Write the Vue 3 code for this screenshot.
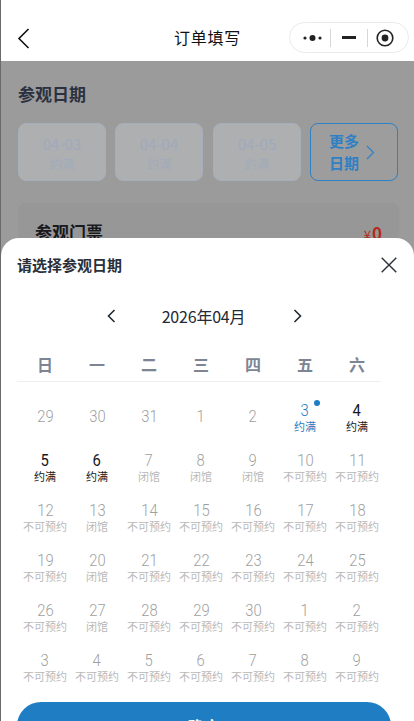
<script setup>
const weekdays = ['日', '一', '二', '三', '四', '五', '六']
const N = '不可预约'
const C = '闭馆'
const F = '约满'
const days = [
  ['29', '', 'off'], ['30', '', 'off'], ['31', '', 'off'], ['1', '', 'off'], ['2', '', 'off'], ['3', F, 'sel'], ['4', F, 'on'],
  ['5', F, 'on'], ['6', F, 'on'], ['7', C, 'off'], ['8', C, 'off'], ['9', C, 'off'], ['10', N, 'off'], ['11', N, 'off'],
  ['12', N, 'off'], ['13', C, 'off'], ['14', N, 'off'], ['15', N, 'off'], ['16', N, 'off'], ['17', N, 'off'], ['18', N, 'off'],
  ['19', N, 'off'], ['20', C, 'off'], ['21', N, 'off'], ['22', N, 'off'], ['23', N, 'off'], ['24', N, 'off'], ['25', N, 'off'],
  ['26', N, 'off'], ['27', C, 'off'], ['28', N, 'off'], ['29', N, 'off'], ['30', N, 'off'], ['1', N, 'off'], ['2', N, 'off'],
  ['3', N, 'off'], ['4', N, 'off'], ['5', N, 'off'], ['6', N, 'off'], ['7', N, 'off'], ['8', N, 'off'], ['9', N, 'off']
].map(([num, sub, state]) => ({ num, sub, state }))
const quick = ['04-03', '04-04', '04-05']
</script>

<template>
  <div class="page">
    <header class="nav">
      <svg class="back" width="13" height="21" viewBox="0 0 13 21"><path d="M11.5 1 2 10.5 11.5 20" fill="none" stroke="#111" stroke-width="1.6" /></svg>
      <h1 class="nav-title">订单填写</h1>
      <div class="capsule">
        <svg width="19" height="8" viewBox="0 0 19 8"><circle cx="2" cy="4" r="1.6" fill="#222" /><circle cx="9.5" cy="4" r="3" fill="#222" /><circle cx="17" cy="4" r="1.6" fill="#222" /></svg>
        <i class="cap-line"></i>
        <span class="cap-minus"></span>
        <i class="cap-line cap-line-b"></i>
        <svg width="18" height="18" viewBox="0 0 18 18"><circle cx="9" cy="9" r="7.8" fill="none" stroke="#222" stroke-width="1.6" /><circle cx="9" cy="9" r="3.4" fill="#222" /></svg>
      </div>
    </header>

    <main class="under">
      <h2 class="section">参观日期</h2>
      <div class="quick">
        <div v-for="q in quick" :key="q" class="q-card">
          <span class="q-date">{{ q }}</span>
          <span class="q-sub">约满</span>
        </div>
        <div class="q-more">
          <span class="q-more-text">更多<br />日期</span>
          <svg width="9" height="15" viewBox="0 0 9 15"><path d="M1 1l6.5 6.5L1 14" fill="none" stroke="#2f80c4" stroke-width="1.2" /></svg>
        </div>
      </div>
      <section class="ticket">
        <span class="ticket-name">参观门票</span>
        <span class="ticket-price"><small>¥</small>0</span>
      </section>
    </main>

    <section class="sheet">
      <div class="sheet-head">
        <h3 class="sheet-title">请选择参观日期</h3>
        <svg width="16" height="16" viewBox="0 0 16 16"><path d="M.7.7l14.6 14.6M15.3.7.7 15.3" fill="none" stroke="#2a2f3a" stroke-width="1.4" /></svg>
      </div>
      <div class="month">
        <svg width="9" height="14" viewBox="0 0 9 14"><path d="M7.5 1 1.5 7l6 6" fill="none" stroke="#222a36" stroke-width="1.6" /></svg>
        <span class="month-label">2026年04月</span>
        <svg width="9" height="14" viewBox="0 0 9 14"><path d="M1.5 1l6 6-6 6" fill="none" stroke="#222a36" stroke-width="1.6" /></svg>
      </div>
      <div class="weekdays">
        <span v-for="w in weekdays" :key="w" class="weekday">{{ w }}</span>
      </div>
      <div class="grid">
        <div v-for="(d, i) in days" :key="i" class="day" :class="d.state">
          <span class="num">{{ d.num }}</span>
          <span v-if="d.sub" class="sub">{{ d.sub }}</span>
          <i v-if="d.state === 'sel'" class="dot"></i>
        </div>
      </div>
      <button class="confirm">确定</button>
    </section>
  </div>
</template>

<style scoped>
.page {
  position: relative;
  width: 414px;
  height: 721px;
  overflow: hidden;
  background: #9b9b9b;
  border-left: 1px solid #6a6a6a;
  box-sizing: border-box;
  font-family: "Noto Sans CJK SC", "Noto Sans", sans-serif;
}
.nav {
  position: relative;
  height: 61px;
  background: #fff;
  box-sizing: border-box;
}
.back { position: absolute; left: 16px; top: 28px; }
.nav-title {
  margin: 0;
  padding-top: 25px;
  text-align: center;
  font-size: 16px;
  line-height: 25px;
  letter-spacing: 0.7px;
  font-weight: 400;
  color: #111;
}
.capsule {
  position: absolute;
  left: 288px;
  top: 22px;
  width: 120px;
  height: 31px;
  box-sizing: border-box;
  border: 1px solid #eaeaea;
  border-radius: 16px;
  background: #fff;
  display: flex;
  align-items: center;
  padding-left: 13px;
}
.cap-line { width: 1px; height: 18px; background: #d6d6d6; margin: 0 11px 0 8px; }
.cap-line-b { margin: 0 8px 0 11px; }
.cap-minus { width: 14px; height: 3px; background: #222; }
.under { padding: 0 15px 0 17px; }
.section {
  margin: 0;
  padding-top: 21px;
  font-size: 17px;
  line-height: 24px;
  font-weight: 700;
  color: #2b3140;
}
.quick {
  display: flex;
  gap: 9px;
  margin-top: 17px;
}
.q-card, .q-more {
  width: 88px;
  height: 58px;
  box-sizing: border-box;
  border-radius: 8px;
  display: flex;
}
.q-card {
  flex-direction: column;
  align-items: center;
  justify-content: center;
  background: #aeafb1;
  border: 1px solid #a5afbb;
}
.q-card:nth-child(3) { margin-left: 1px; }
.q-date { font-size: 15px; line-height: 23px; color: #9eaabd; }
.q-sub { font-size: 12px; line-height: 17px; color: #a0abbb; }
.q-more {
  align-items: center;
  justify-content: center;
  gap: 7px;
  padding-right: 4px;
  border: 1px solid #2f80c4;
  background: #9d9d9d;
}
.q-more-text { font-size: 15px; line-height: 22px; font-weight: 700; color: #2f80c4; text-align: center; }
.ticket {
  margin-top: 22px;
  height: 80px;
  padding: 17px 17px 0;
  background: #979797;
  border-radius: 8px;
  display: flex;
  justify-content: space-between;
  align-items: flex-start;
}
.ticket-name { font-size: 17px; line-height: 24px; font-weight: 700; color: #181a1e; }
.ticket-price { font-size: 17px; line-height: 26px; font-weight: 700; color: #b5281c; }
.ticket-price small { font-size: 13px; font-weight: 400; margin-right: 1px; }
.sheet {
  position: absolute;
  left: 0;
  right: 0;
  top: 238px;
  height: 483px;
  background: #fff;
  border-radius: 18px 18px 0 0;
  overflow: hidden;
}
.sheet-head {
  display: flex;
  justify-content: space-between;
  align-items: center;
  padding: 17px 17px 0 16px;
  height: 20px;
}
.sheet-title { margin: 0; font-size: 15px; line-height: 20px; font-weight: 700; color: #2a2f3a; }
.month {
  display: flex;
  align-items: center;
  justify-content: center;
  margin: 29px 0 0 -6px;
  height: 24px;
}
.month-label {
  width: 177px;
  padding-right: 2px;
  box-sizing: border-box;
  text-align: center;
  font-size: 16px;
  line-height: 24px;
  letter-spacing: -0.2px;
  color: #222a36;
}
.weekdays {
  display: grid;
  grid-template-columns: repeat(7, 52px);
  margin: 24px 0 0 16px;
  padding: 0 0 2px 2px;
  width: 362px;
  height: 27px;
  border-bottom: 1px solid #eeeeee;
  box-sizing: content-box;
}
.weekday {
  text-align: center;
  font-size: 16px;
  line-height: 24px;
  font-weight: 700;
  color: #7d8595;
}
.grid {
  display: grid;
  grid-template-columns: repeat(7, 52px);
  grid-auto-rows: 50px;
  padding: 14px 0 0 18px;
}
.day {
  position: relative;
  display: flex;
  flex-direction: column;
  align-items: center;
  justify-content: center;
  height: 40px;
}
.num {
  display: inline-block;
  font-family: Roboto, sans-serif;
  font-weight: 300;
  font-size: 17px;
  line-height: 20px;
  transform: scaleX(0.87);
}
.sub { font-size: 11px; line-height: 13px; white-space: nowrap; }
.off .num { color: #9f9f9f; }
.off .sub { color: #b9b9b9; }
.on .num, .on .sub { color: #16181d; }
.on .num { font-weight: 400; }
.sel .num, .sel .sub { color: #1f7dc3; }
.dot {
  position: absolute;
  top: 4px;
  left: 35px;
  width: 6px;
  height: 6px;
  border-radius: 50%;
  background: #1f7dc3;
}
.confirm {
  display: block;
  position: absolute;
  left: 16px;
  top: 464px;
  width: 374px;
  height: 48px;
  border: 0;
  border-radius: 24px;
  background: #1f7dc3;
  color: #fff;
  font-family: inherit;
  font-size: 16px;
  font-weight: 700;
  line-height: 48px;
  padding: 0;
}
</style>
